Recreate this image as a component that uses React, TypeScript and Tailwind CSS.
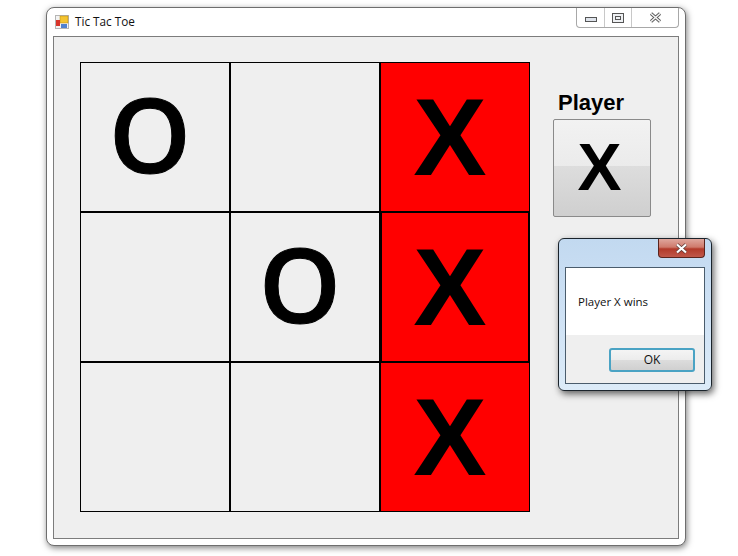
const cells = ['O', '', 'X', '', 'O', 'X', '', '', 'X']

function Cell({ value, row, col }: { value: string; row: number; col: number }) {
  const win = col === 2
  return (
    <div
      className={`flex items-center justify-center border-black pr-[10px] leading-none ${
        win ? 'bg-[#ff0000]' : 'bg-[#efefef]'
      } ${col < 2 ? 'border-r-2' : ''} ${row < 2 ? 'border-b-2' : ''} ${win && row === 1 ? 'border-x' : ''}`}
    >
      <span className={value === 'O' ? "pb-[8px] font-['Open_Sans',sans-serif] text-[104px] font-semibold [-webkit-text-stroke:1px_black]" : 'text-[110px] font-bold'}>{value}</span>
    </div>
  )
}

function MessageBox() {
  return (
    <div className="absolute left-[558px] top-[238px] flex h-[153px] w-[154px] flex-col rounded-[6px] border border-[#1a232b] bg-[linear-gradient(to_bottom,#c2d9f0_0%,#cfe2f5_50%,#dcebf8_100%)] px-[6px] pb-[6px] shadow-[2px_3px_7px_rgba(0,0,0,0.6)]">
      <div className="flex h-[28px] shrink-0 justify-end">
        <div className="flex h-[19px] w-[47px] items-center justify-center rounded-b-[4px] border border-t-0 border-[#5a241d] bg-[linear-gradient(to_bottom,#dfa79d_0%,#cf7a6c_45%,#b23a2a_55%,#c0584a_100%)]">
          <svg width="13" height="11" viewBox="0 0 13 11">
            <path d="M2 1.5 L11 9.5 M11 1.5 L2 9.5" stroke="#5a3a36" strokeWidth="3.6" />
            <path d="M2 1.5 L11 9.5 M11 1.5 L2 9.5" stroke="#ffffff" strokeWidth="2.2" />
          </svg>
        </div>
      </div>
      <div className="flex flex-1 flex-col border border-[#4a5c6c]">
        <div className="flex h-[67px] items-center bg-white pl-[12px] pt-[1px] font-['Open_Sans',sans-serif] text-[11.5px] text-[#111]">
          Player X wins
        </div>
        <div className="flex flex-1 items-center justify-end bg-[#efefef] pr-[9px] pt-[1px]">
          <div className="flex h-[24px] w-[86px] items-center justify-center rounded-[3px] border-2 border-[#4aa3c4] bg-[linear-gradient(to_bottom,#f4f4f4_0%,#ececec_48%,#dcdcdc_52%,#d0d0d0_100%)] font-['Open_Sans',sans-serif] text-[12px] text-[#111]">
            OK
          </div>
        </div>
      </div>
    </div>
  )
}

export default function App() {
  return (
    <div className="relative h-[556px] w-[738px] overflow-hidden bg-white pl-[46px] pt-[7px] font-['Liberation_Sans',sans-serif] text-black">
      <div className="flex h-[539px] w-[640px] flex-col rounded-[8px] border border-[#6e6e6e] bg-white px-[6px] pb-[6px] shadow-[1px_2px_6px_rgba(0,0,0,0.5)]">
        <div className="flex h-[28px] shrink-0 items-start justify-between">
          <div className="flex items-center gap-[6px] pl-[2px] pt-[7px]">
            <svg width="14" height="14" viewBox="0 0 14 14">
              <rect x="0.5" y="0.5" width="13" height="13" fill="#f3f3f3" stroke="#b5b5b5" />
              <rect x="5" y="1" width="8" height="7" fill="#f4c430" stroke="#b8860b" strokeWidth="0.5" />
              <rect x="1" y="5" width="4" height="6" fill="#d8352a" />
              <rect x="6" y="9" width="6" height="4" fill="#4f81d0" />
            </svg>
            <span className="font-['Open_Sans',sans-serif] text-[11.75px] leading-none text-[#111]">Tic Tac Toe</span>
          </div>
          <div className="flex h-[20px] w-[103px] rounded-b-[4px] border border-t-0 border-[#a8a8a8] bg-white">
            <div className="flex w-[28px] items-end justify-center border-r border-[#c8c8c8] pb-[5px]">
              <div className="h-[5px] w-[12px] border border-[#555] bg-[#dfe4ec]" />
            </div>
            <div className="flex w-[27px] items-center justify-center border-r border-[#c8c8c8]">
              <div className="flex h-[10px] w-[12px] items-center justify-center border border-[#555] bg-[#eef0f3]">
                <div className="h-[4px] w-[6px] border border-[#555]" />
              </div>
            </div>
            <div className="flex flex-1 items-center justify-center">
              <svg width="13" height="11" viewBox="0 0 13 11">
                <path d="M2 1.5 L11 9.5 M11 1.5 L2 9.5" stroke="#555" strokeWidth="3.2" />
                <path d="M2 1.5 L11 9.5 M11 1.5 L2 9.5" stroke="#f4f4f4" strokeWidth="1.6" />
              </svg>
            </div>
          </div>
        </div>
        <div className="flex flex-1 items-start border border-[#7c7c7c] bg-[#efefef] pl-[26px] pt-[25px]">
          <div className="grid h-[450px] w-[450px] grid-cols-[150px_150px_148px] grid-rows-[150px_150px_148px] border border-black">
            {cells.map((c, i) => (
              <Cell key={i} value={c} row={Math.floor(i / 3)} col={i % 3} />
            ))}
          </div>
          <div className="ml-[23px] flex flex-col">
            <div className="pl-[5px] pt-[28px] text-[22px] font-bold leading-[25px] text-black">Player</div>
            <div className="mt-[4px] flex h-[98px] w-[98px] items-center justify-center rounded-[2px] border border-[#8a8a8a] bg-[linear-gradient(to_bottom,#f2f2f2_0%,#ebebeb_48%,#dddddd_48%,#cfcfcf_100%)] pb-[2px] pr-[5px] text-[66px] font-bold leading-none">
              X
            </div>
          </div>
        </div>
      </div>
      <MessageBox />
    </div>
  )
}
